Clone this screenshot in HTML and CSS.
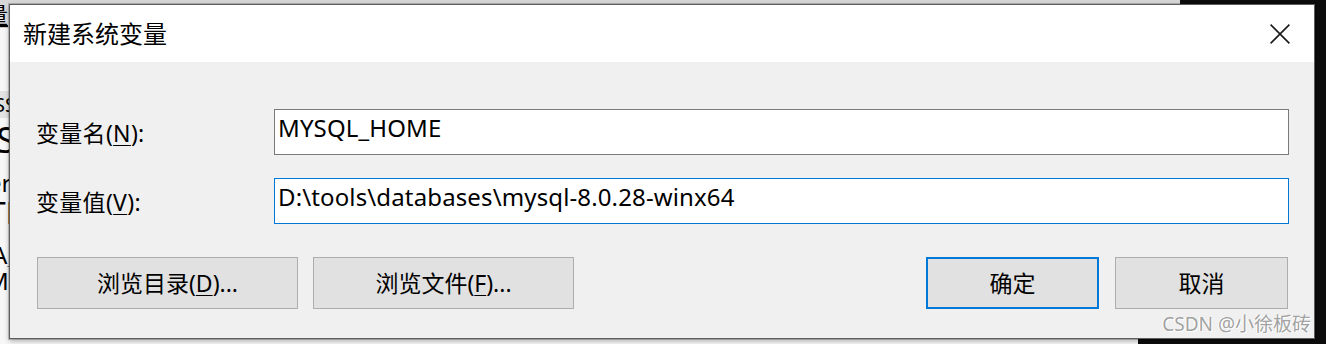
FILE: index.html
```html
<!DOCTYPE html>
<html lang="zh-CN">
<head>
<meta charset="utf-8">
<title>新建系统变量</title>
<link rel="stylesheet" href="styles.css">
</head>
<body>
<div class="desktop">
  <div class="behind">
    <div class="behind-top"><span class="behind-head">量</span></div>
    <div class="behind-rows">
      <div class="brow brow-sel r1"><span class="frag f1">SS</span></div>
      <div class="brow r2"><span class="frag f2">S</span></div>
      <div class="brow r3"><span class="frag f3">er</span></div>
      <div class="brow r4"><span class="frag f4">TF</span></div>
      <div class="brow r5"><span class="frag f5">A_</span></div>
      <div class="brow r6"><span class="frag f6">ME</span></div>
    </div>
  </div>
  <div class="black-right"></div>
  <div class="black-top"></div>
  <div class="black-bottom"></div>

  <div class="dialog">
    <div class="titlebar">
      <div class="title">新建系统变量</div>
      <svg class="close" width="20" height="20" viewBox="0 0 20 20" aria-hidden="true">
        <path d="M0.6 0.6 L19.4 19.4 M19.4 0.6 L0.6 19.4" stroke="#1a1a1a" stroke-width="1.6" fill="none"/>
      </svg>
    </div>
    <div class="body">
      <div class="row">
        <div class="label">变量名(<u>N</u>):</div>
        <div class="field">MYSQL_HOME</div>
      </div>
      <div class="row">
        <div class="label">变量值(<u>V</u>):</div>
        <div class="field field-focus">D:\tools\databases\mysql-8.0.28-winx64</div>
      </div>
      <div class="buttons">
        <div class="btn btn-wide">浏览目录(<u>D</u>)...</div>
        <div class="btn btn-wide">浏览文件(<u>F</u>)...</div>
        <div class="spacer"></div>
        <div class="btn btn-narrow btn-default">确定</div>
        <div class="btn btn-narrow">取消</div>
      </div>
    </div>
    <div class="watermark">CSDN @小徐板砖</div>
  </div>
</div>
</body>
</html>
```

FILE: styles.css
```css
* { box-sizing: border-box; }
html, body {
  margin: 0;
  padding: 0;
  width: 1326px;
  height: 344px;
  overflow: hidden;
}
body {
  font-family: "Noto Sans", "Noto Sans CJK SC", sans-serif;
  color: #000;
  background: #f3f3f3;
}
.desktop {
  position: relative;
  width: 1326px;
  height: 344px;
  overflow: hidden;
}

/* window behind the dialog */
.behind {
  position: absolute;
  left: 0;
  top: 0;
  width: 1326px;
  height: 344px;
  background: #f7f7f7;
}
.behind-top {
  height: 28px;
  background: linear-gradient(#d6d6d6, #e4e4e4);
  border-bottom: 1px solid #c8c8c8;
  overflow: hidden;
}
.behind-head {
  display: block;
  margin-left: -14px;
  font-size: 22px;
  line-height: 28px;
  text-decoration: underline overline;
}
.behind-rows {
  display: flex;
  flex-direction: column;
  padding-top: 63px;
}
.brow {
  display: flex;
  overflow: hidden;
  font-size: 24px;
  line-height: 24px;
  flex: none;
}
.brow-sel { background: #e3e3e3; }
.r1 { height: 27px; align-items: center; }
.r2 { height: 43px; align-items: center; }
.r3 { height: 34px; align-items: flex-end; }
.r4 { height: 36px; align-items: center; }
.r5 { height: 36px; align-items: flex-end; }
.r6 { height: 28px; align-items: center; }
.frag { white-space: nowrap; }
.f1 { margin-left: -6px; font-size: 20px; line-height: 22px; }
.f2 { margin-left: -4px; font-size: 36px; line-height: 38px; }
.f3 { margin-left: -12px; }
.f4 { margin-left: -11px; font-size: 30px; line-height: 32px; }
.f5 { margin-left: -8px; }
.f6 { margin-left: -13px; }

.black-right {
  position: absolute;
  left: 1314px;
  top: 0;
  width: 12px;
  height: 344px;
  background: #0c0c0c;
}
.black-top {
  position: absolute;
  left: 1180px;
  top: 0;
  width: 146px;
  height: 6px;
  background: #0c0c0c;
}
.black-bottom {
  position: absolute;
  left: 1138px;
  top: 336px;
  width: 188px;
  height: 8px;
  background: #0c0c0c;
}

/* dialog */
.dialog {
  position: absolute;
  left: 9px;
  top: 4px;
  width: 1306px;
  height: 335px;
  border: 1px solid #5e5e5e;
  box-shadow: 0 0 0 1px rgba(0,0,0,0.18), 0 2px 5px rgba(0,0,0,0.3);
  display: flex;
  flex-direction: column;
  background: #f0f0f0;
}
.titlebar {
  height: 57px;
  flex: none;
  background: #fff;
  display: flex;
  align-items: center;
  padding: 0 24px 0 13px;
}
.title {
  flex: 1;
  font-size: 24px;
  line-height: 30px;
  font-family: "Noto Sans CJK SC", sans-serif;
  margin-top: -1px;
}
.close { flex: none; display: block; margin-top: 1px; }

.body {
  flex: 1;
  display: flex;
  flex-direction: column;
  padding: 47px 25px 0 26px;
  gap: 23px;
}
.row {
  display: flex;
  align-items: center;
  height: 46px;
}
.label {
  width: 238px;
  flex: none;
  font-size: 23px;
  line-height: 30px;
  padding-top: 2px;
  letter-spacing: 0.3px;
}
.label u, .btn u { text-underline-offset: 3px; text-decoration-thickness: 1px; }
.field {
  flex: 1;
  height: 46px;
  background: #fff;
  border: 1px solid #7a7a7a;
  display: flex;
  align-items: center;
  padding: 0 0 8px 3px;
  font-size: 24px;
  line-height: 30px;
  letter-spacing: 0.13px;
  white-space: nowrap;
}
.field-focus { border-color: #0078d7; }

.buttons {
  display: flex;
  margin-top: 10px;
  padding: 0 1px 0 1px;
  gap: 15px;
}
.spacer { flex: 1; }
.btn {
  height: 52px;
  background: #e1e1e1;
  border: 1px solid #adadad;
  display: flex;
  align-items: center;
  justify-content: center;
  font-size: 23px;
  line-height: 30px;
  flex: none;
}
.btn-wide { width: 261px; }
.btn-narrow { width: 173px; }
.btn-narrow + .btn-narrow { margin-left: 1px; }
.btn-default { border: 2px solid #0078d7; }

.watermark {
  position: absolute;
  right: 3px;
  bottom: 3px;
  font-size: 19px;
  line-height: 22px;
  color: #a2a2a2;
  text-shadow: 1px 1px 0 #fff, -1px 0 0 #fff;
  font-family: "Noto Sans", "Noto Sans CJK SC", sans-serif;
  white-space: nowrap;
}
```
